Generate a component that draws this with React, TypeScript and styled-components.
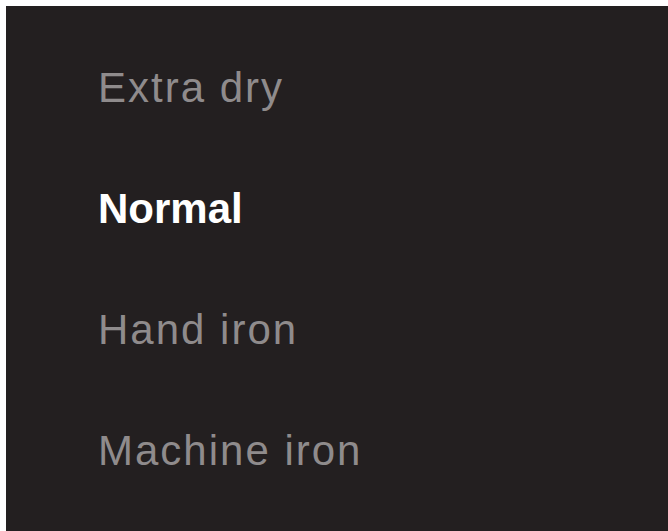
import styled, { createGlobalStyle } from 'styled-components';

const GlobalStyle = createGlobalStyle`
  html, body {
    margin: 0;
    padding: 0;
    background: #ffffff;
  }
`;

type Option = {
  label: string;
  selected?: boolean;
};

const OPTIONS: Option[] = [
  { label: 'Extra dry' },
  { label: 'Normal', selected: true },
  { label: 'Hand iron' },
  { label: 'Machine iron' },
];

const App = () => {
  return (
    <>
      <GlobalStyle />
      <Frame>
        <Panel>
          <OptionList>
            {OPTIONS.map((option) => (
              <OptionItem key={option.label} selected={option.selected}>
                {option.label}
              </OptionItem>
            ))}
          </OptionList>
        </Panel>
      </Frame>
    </>
  );
};

export default App;

const Frame = styled.div`
  width: 668px;
  height: 531px;
  padding: 6px 0 0 6px;
  box-sizing: border-box;
  overflow: hidden;
  background: #ffffff;
`;

const Panel = styled.div`
  height: 100%;
  background-color: #231f20;
  padding: 46px 0 0 92px;
  box-sizing: border-box;
`;

const OptionList = styled.ul`
  list-style: none;
  margin: 0;
  padding: 0;
  display: flex;
  flex-direction: column;
`;

type OptionItemProps = {
  selected?: boolean;
};

const OptionItem = styled.li<OptionItemProps>`
  height: 121px;
  font-family: 'Liberation Sans', Arial, sans-serif;
  font-size: 42px;
  line-height: 72px;
  letter-spacing: ${(props) => (props.selected ? '0' : '2px')};
  font-weight: ${(props) => (props.selected ? 700 : 400)};
  color: ${(props) => (props.selected ? '#ffffff' : '#8f8b8c')};
`;
